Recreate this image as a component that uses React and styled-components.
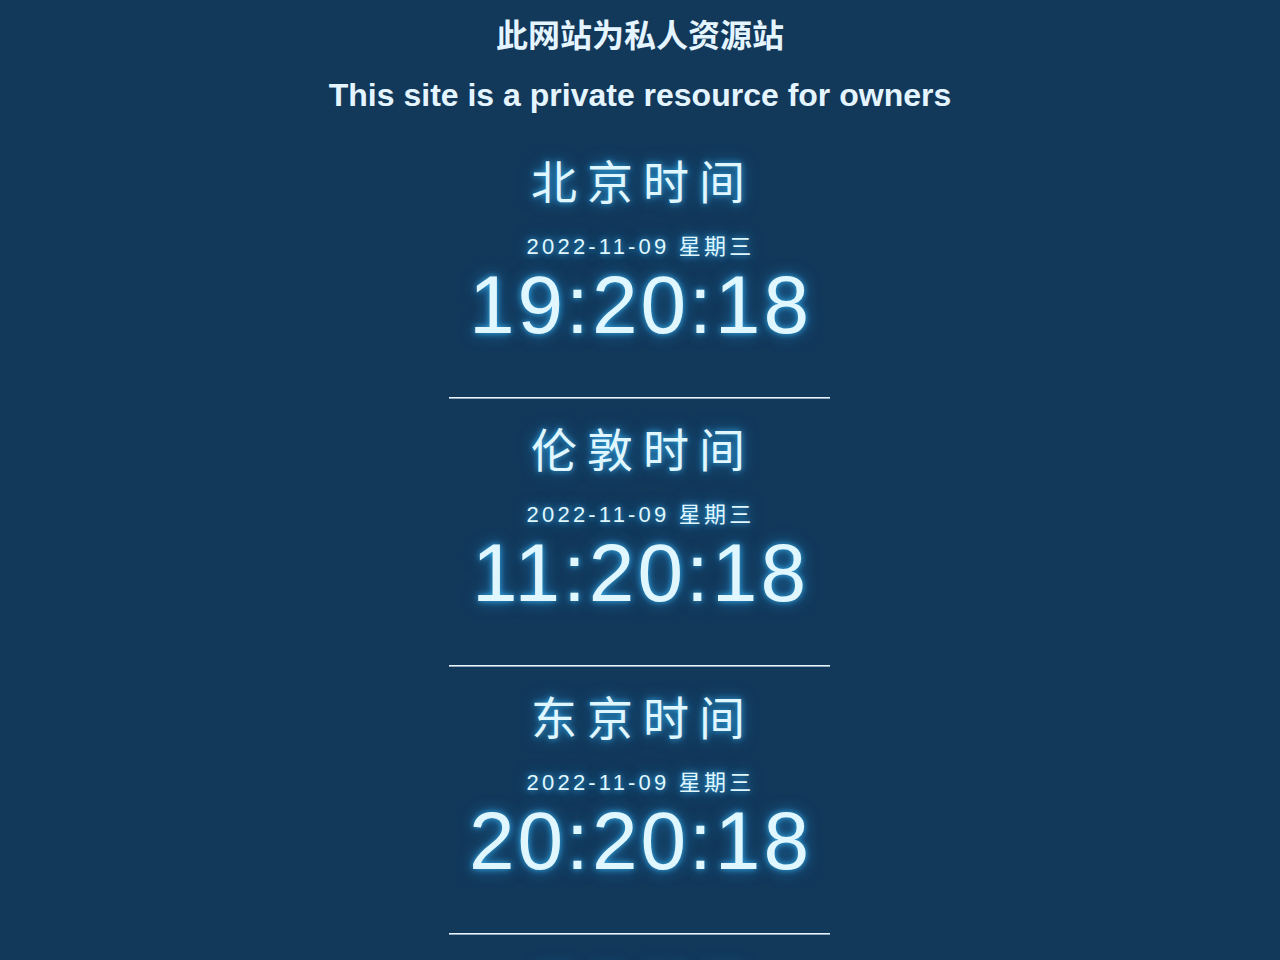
import React from "react";
import styled, { createGlobalStyle } from "styled-components";

const zones = [
    { city: "北京时间", date: "2022-11-09 星期三", time: "19:20:18" },
    { city: "伦敦时间", date: "2022-11-09 星期三", time: "11:20:18" },
    { city: "东京时间", date: "2022-11-09 星期三", time: "20:20:18" },
    { city: "纽约时间", date: "2022-11-09 星期三", time: "06:20:18" },
];

const App = () => {
    return (
        <Page>
            <GlobalStyle />
            <Notice>
                <Line>此网站为私人资源站</Line>
                <Line $gap>This site is a private resource for owners</Line>
            </Notice>
            <Clocks>
                {zones.map((z) => (
                    <Zone key={z.city}>
                        <City>{z.city}</City>
                        <DateText>{z.date}</DateText>
                        <Time>{z.time}</Time>
                        <Divider />
                    </Zone>
                ))}
            </Clocks>
        </Page>
    );
};

const GlobalStyle = createGlobalStyle`
    html, body {
        margin: 0;
        padding: 0;
        background: #12385a;
    }
    body {
        font-family: "Liberation Sans", "Noto Sans CJK SC", sans-serif;
    }
`;

const Page = styled.div`
    height: 100vh;
    background: #12385a;
    color: #e2f6ff;
    display: flex;
    flex-direction: column;
    align-items: center;
    overflow: hidden;
`;

const Notice = styled.div`
    padding-top: 16px;
    display: flex;
    flex-direction: column;
    align-items: center;
`;

const Line = styled.div`
    font-size: 32px;
    font-weight: bold;
    line-height: 40px;
    color: #e4f5ff;
    margin-top: ${(p) => (p.$gap ? "19px" : "0")};
    white-space: nowrap;
`;

const Clocks = styled.div`
    margin-top: 36px;
    margin-right: 2px;
    display: flex;
    flex-direction: column;
    align-items: center;
`;

const Zone = styled.div`
    width: 381px;
    display: flex;
    flex-direction: column;
    align-items: center;
`;

const glow = `
    color: #e0f7ff;
    text-shadow: 0 0 6px rgba(60, 190, 255, 0.85), 0 0 16px rgba(40, 160, 240, 0.6);
`;

const City = styled.div`
    ${glow}
    font-family: "Noto Sans CJK SC", sans-serif;
    font-weight: 400;
    font-size: 46px;
    line-height: 56px;
    letter-spacing: 10px;
    margin-right: -8px;
`;

const DateText = styled.div`
    ${glow}
    font-family: "Liberation Sans", "Noto Sans CJK SC", sans-serif;
    font-size: 22px;
    line-height: 27px;
    letter-spacing: 3.2px;
    margin-top: 26px;
    margin-right: -3px;
`;

const Time = styled.div`
    ${glow}
    font-family: "Liberation Sans", sans-serif;
    font-size: 82px;
    line-height: 90px;
    letter-spacing: 3px;
    margin-right: -3px;
`;

const Divider = styled.div`
    align-self: stretch;
    height: 1px;
    margin: 47px 0 20px;
    background: #eaf4fa;
    border-bottom: 1px solid #8eaac0;
`;

export default App;
